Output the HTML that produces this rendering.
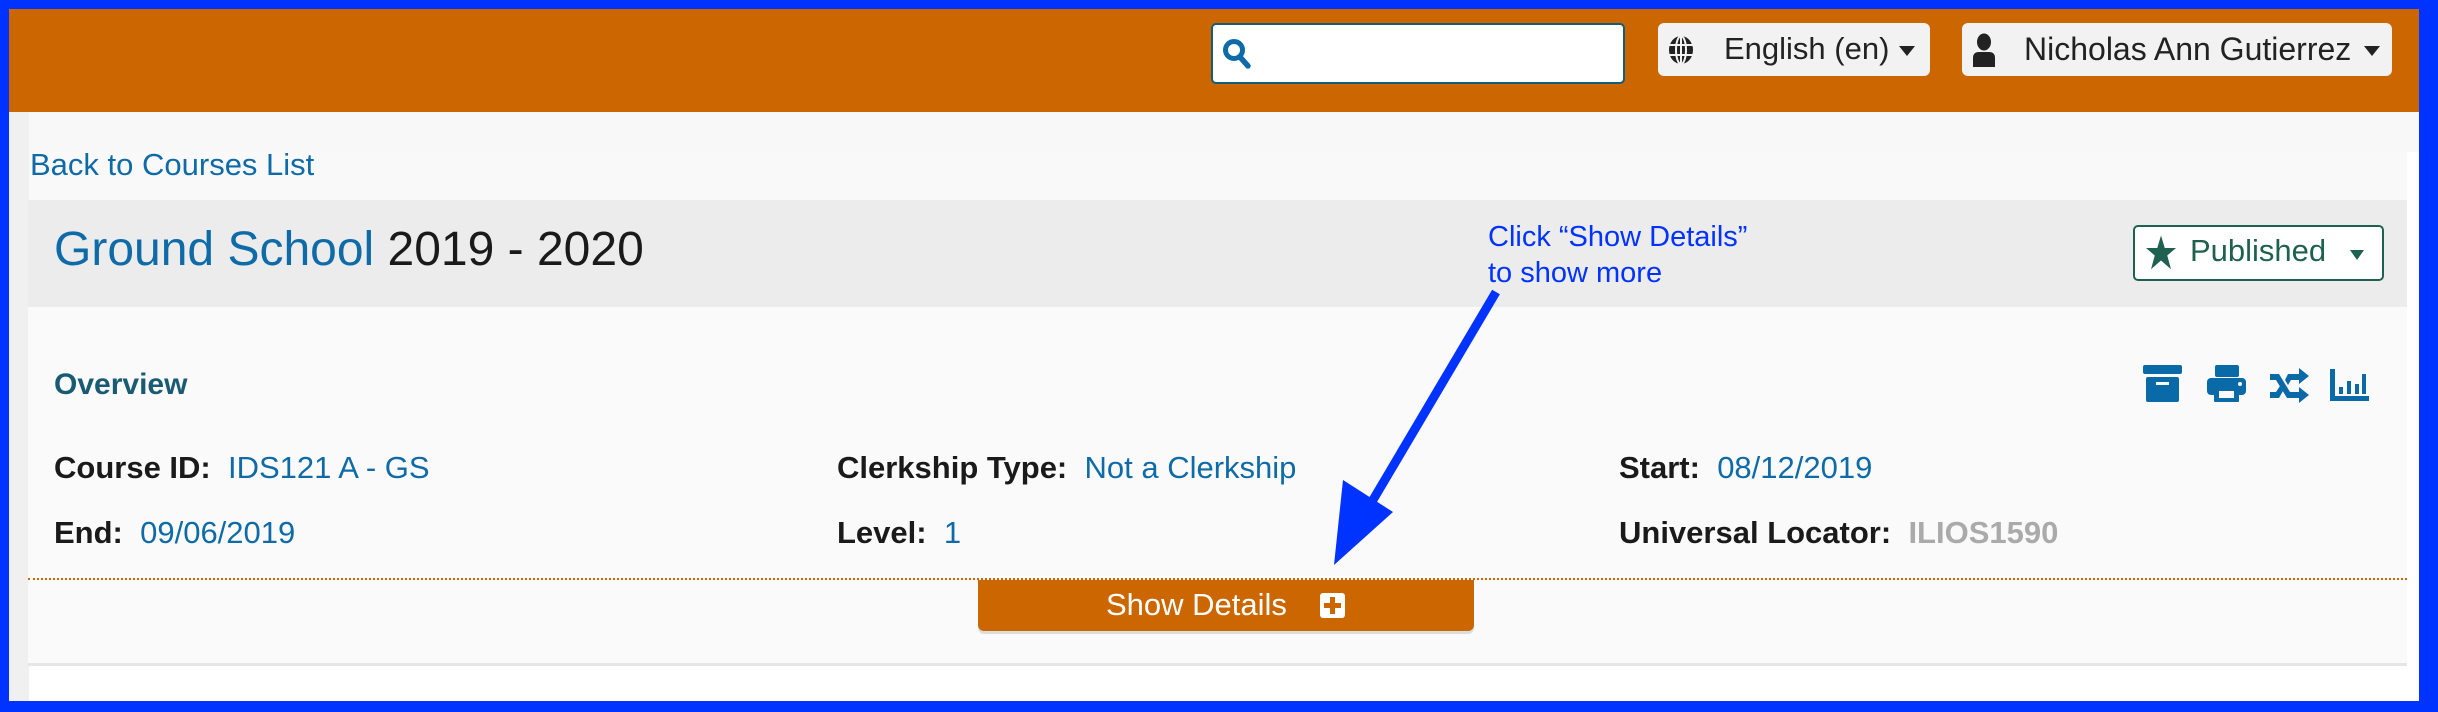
<!DOCTYPE html>
<html><head><meta charset="utf-8"><style>
*{margin:0;padding:0;box-sizing:border-box}
body{width:2438px;height:712px;background:#0033ff;position:relative;overflow:hidden;font-family:"Liberation Sans",sans-serif}
.a{position:absolute;white-space:nowrap}
.page{left:9px;top:9px;width:2410px;height:692px;background:#fff}
.hdr{left:9px;top:9px;width:2410px;height:103px;background:#cc6600}
.lnk{color:#0e6ba8}
.lbl{font-weight:bold;color:#1a1a1a}
.t26{font-size:31px}
</style></head><body>
<div class="a page"></div>
<div class="a" style="left:9px;top:112px;width:20px;height:589px;background:#f0f0f0"></div>
<div class="a" style="left:29px;top:112px;width:2390px;height:40px;background:#f8f8f8"></div>
<div class="a hdr"></div>
<div class="a" style="left:1211px;top:23px;width:414px;height:61px;background:#fff;border:2px solid #0f5f77;border-radius:5px"></div>
<svg class="a" style="left:1222px;top:38px" width="30" height="32" viewBox="0 0 30 32"><circle cx="12" cy="12" r="8.5" fill="none" stroke="#0e6ba8" stroke-width="5"/><path d="M18 19 L26 28" stroke="#0e6ba8" stroke-width="5.5" stroke-linecap="round"/></svg>
<div class="a" style="left:1658px;top:23px;width:272px;height:53px;background:#f2f2f2;border-radius:6px"></div>
<svg class="a" style="left:1668px;top:35px" width="26" height="30" viewBox="0 0 26 30"><ellipse cx="13" cy="15" rx="12" ry="14" fill="#222"/><g stroke="#f2f2f2" stroke-width="2" fill="none"><ellipse cx="13" cy="15" rx="5" ry="14"/><path d="M1 10H25M1 20H25M13 1V29"/></g></svg>
<div class="a" style="left:1724px;top:31px;font-size:31px;color:#222">English (en)</div>
<div class="a" style="left:1899px;top:46px;width:0;height:0;border-left:8px solid transparent;border-right:8px solid transparent;border-top:10px solid #222"></div>
<div class="a" style="left:1962px;top:23px;width:430px;height:53px;background:#f2f2f2;border-radius:6px"></div>
<svg class="a" style="left:1970px;top:33px" width="28" height="34" viewBox="0 0 28 34"><ellipse cx="14" cy="9" rx="7" ry="8.5" fill="#222"/><path d="M3 34V25Q3 19 9 19H19Q25 19 25 25V34Z" fill="#222"/></svg>
<div class="a" style="left:2024px;top:31px;font-size:32px;color:#222">Nicholas Ann Gutierrez</div>
<div class="a" style="left:2364px;top:46px;width:0;height:0;border-left:8px solid transparent;border-right:8px solid transparent;border-top:10px solid #222"></div>
<div class="a" style="left:29px;top:152px;width:2378px;height:48px;background:#f9f9f9"></div>
<div class="a lnk" style="left:30px;top:147px;font-size:31px">Back to Courses List</div>
<div class="a" style="left:28px;top:200px;width:2379px;height:107px;background:#ececec"></div>
<div class="a" style="left:54px;top:222px;font-size:48px;color:#1a1a1a"><span class="lnk">Ground School</span> 2019 - 2020</div>
<div class="a" style="left:1488px;top:219px;font-size:29px;color:#0033ff;line-height:36px">Click “Show Details”<br>to show more</div>
<div class="a" style="left:2133px;top:225px;width:251px;height:56px;background:#fff;border:2px solid #1f6150;border-radius:5px"></div>
<svg class="a" style="left:2146px;top:235px" width="30" height="36" viewBox="0 0 24 28"><path d="M12 0L15 10H24L17 16L20 27L12 20L4 27L7 16L0 10H9Z" fill="#1f6150"/></svg>
<div class="a" style="left:2190px;top:233px;font-size:31px;color:#1f6150">Published</div>
<div class="a" style="left:2350px;top:250px;width:0;height:0;border-left:7px solid transparent;border-right:7px solid transparent;border-top:10px solid #1f6150"></div>
<div class="a" style="left:28px;top:307px;width:2379px;height:359px;background:#fafafa;border-bottom:3px solid #e6e6e6"></div>
<div class="a" style="left:54px;top:368px;font-size:30px;font-weight:bold;color:#1a5b73">Overview</div>
<svg class="a" style="left:2143px;top:365px" width="230" height="40" viewBox="0 0 230 40">
<g fill="#0a6aa8">
<rect x="0" y="0" width="39" height="9" rx="2"/><rect x="3" y="12" width="33" height="25" rx="2"/><rect x="13" y="17" width="13" height="3" fill="#fafafa"/>
<rect x="72" y="0" width="24" height="12" rx="2"/><rect x="64" y="13" width="39" height="17" rx="4"/><rect x="71" y="22" width="25" height="15" rx="1"/><rect x="76" y="26" width="15" height="7" fill="#fafafa"/><circle cx="97" cy="19" r="2" fill="#fafafa"/>
<path d="M127 9H136L147 27H156V22L166 30L156 38V33H144L133 15H127Z"/><path d="M127 27H133L137 21L140 26L136 33H127Z"/><path d="M156 3L166 11L156 19V15H148L145 20L142 15L145 9H156Z"/>
<rect x="187" y="4" width="5" height="31"/><rect x="187" y="31" width="39" height="5"/><rect x="196" y="22" width="4" height="7"/><rect x="204" y="16" width="4" height="13"/><rect x="212" y="19" width="4" height="10"/><rect x="219" y="9" width="4" height="20"/>
</g></svg>
<div class="a t26" style="left:54px;top:450px"><span class="lbl">Course ID:</span>&nbsp; <span class="lnk">IDS121 A - GS</span></div>
<div class="a t26" style="left:837px;top:450px"><span class="lbl">Clerkship Type:</span>&nbsp; <span class="lnk">Not a Clerkship</span></div>
<div class="a t26" style="left:1619px;top:450px"><span class="lbl">Start:</span>&nbsp; <span class="lnk">08/12/2019</span></div>
<div class="a t26" style="left:54px;top:515px"><span class="lbl">End:</span>&nbsp; <span class="lnk">09/06/2019</span></div>
<div class="a t26" style="left:837px;top:515px"><span class="lbl">Level:</span>&nbsp; <span class="lnk">1</span></div>
<div class="a t26" style="left:1619px;top:515px"><span class="lbl">Universal Locator:</span>&nbsp; <span style="color:#aaa;font-weight:bold">ILIOS1590</span></div>
<div class="a" style="left:28px;top:578px;width:2379px;border-top:2px dotted #cc6600"></div>
<div class="a" style="left:978px;top:580px;width:496px;height:51px;background:#cc6600;border-radius:0 0 6px 6px;box-shadow:0 3px 0 #ddd"></div>
<div class="a" style="left:1106px;top:587px;font-size:31px;color:#fff">Show Details</div>
<div class="a" style="left:1320px;top:593px;width:25px;height:25px;background:#fff;border-radius:3px"></div>
<div class="a" style="left:1330px;top:597px;width:5px;height:17px;background:#cc6600"></div>
<div class="a" style="left:1324px;top:603px;width:17px;height:5px;background:#cc6600"></div>
<svg class="a" style="left:0;top:0" width="2438" height="712"><path d="M1496 292 L1370 505" stroke="#0033ff" stroke-width="9"/><path d="M1334 565 L1343 480 L1393 512Z" fill="#0033ff"/></svg>
</body></html>
